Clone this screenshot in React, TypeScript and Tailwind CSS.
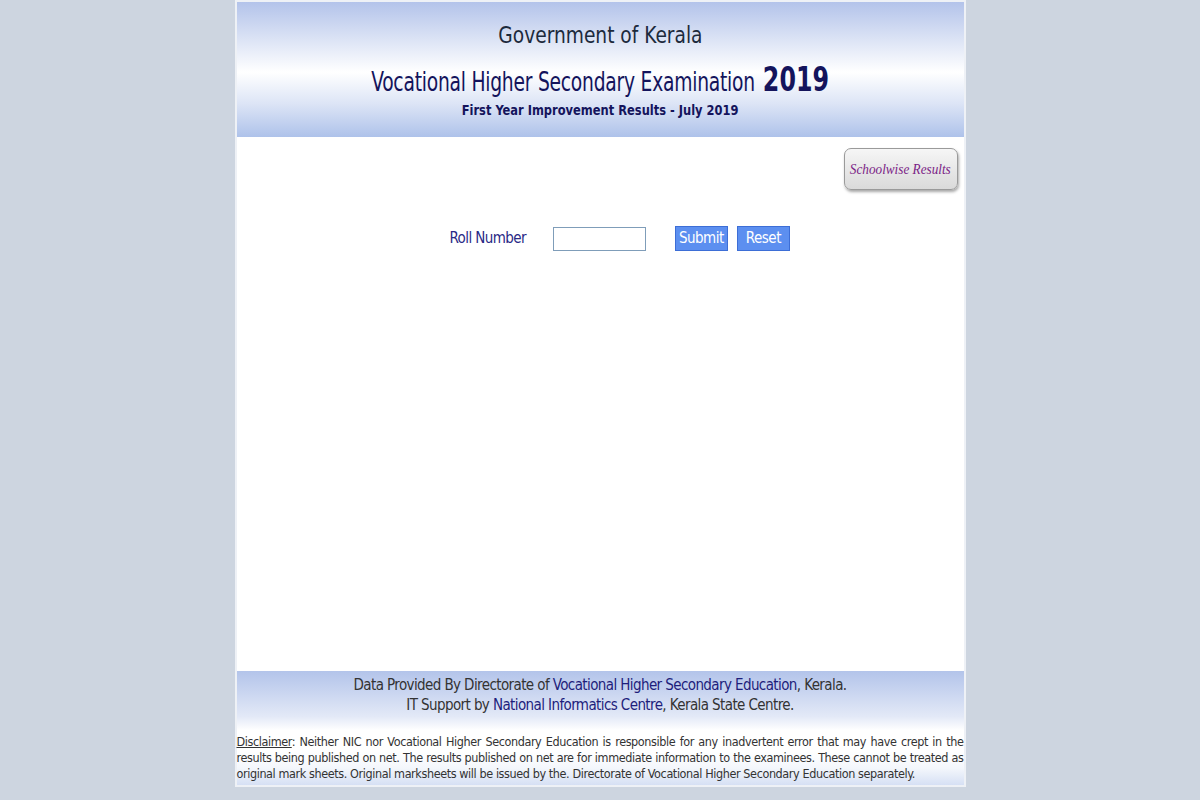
import React from "react";

const F = { fontFamily: '"DejaVu Sans Condensed", "DejaVu Sans", Verdana, sans-serif' };

export default function App() {
  return (
    <div className="w-[1200px] h-[800px] bg-[#cdd5e0] flex justify-center" style={F}>
      <div className="w-[731px] h-[787px] bg-white border-2 border-[#eef1f6] flex flex-col">
        <div className="h-[135px] bg-[linear-gradient(to_bottom,#b3c3ea_0%,#dfe6f6_30%,#ffffff_52%,#dde5f6_75%,#aec2ea_100%)] flex flex-col items-center">
          <div className="mt-[18px] text-[23px] leading-[30px] text-[#1c2a3c] scale-x-[0.9] whitespace-nowrap">Government of Kerala</div>
          <div className="mt-[13px] flex items-baseline text-[#14145c] scale-x-[0.8] whitespace-nowrap">
            <span className="text-[26px] leading-[34px] tracking-[-0.3px]">Vocational Higher Secondary Examination</span>
            <span className="ml-[10px] text-[33px] leading-[34px] font-bold">2019</span>
          </div>
          <div className="mt-[2px] text-[14px] leading-[18px] font-bold text-[#14145c] scale-x-[0.91] whitespace-nowrap">First Year Improvement Results - July 2019</div>
        </div>
        <div className="flex-1 flex flex-col">
          <div className="flex justify-end pr-[6px] pt-[11px]">
            <div className="w-[114px] h-[42px] rounded-[7px] border border-[#9a9a9a] bg-[linear-gradient(to_bottom,#f6f6f6,#dadada)] shadow-[1px_2px_3px_rgba(0,0,0,0.35)] flex items-center justify-center">
              <span className="text-[15px] italic text-[#7b1d86] whitespace-nowrap scale-x-[0.88]" style={{ fontFamily: '"Liberation Serif", "Times New Roman", serif' }}>Schoolwise Results</span>
            </div>
          </div>
          <div className="mt-[36px] flex items-center pl-[213px]">
            <span className="text-[15px] text-[#2a2a86] tracking-[-0.6px]">Roll Number</span>
            <div className="ml-[27px] w-[93px] h-[24px] border border-[#7f9db9] bg-white" />
            <div className="ml-[29px] w-[53px] h-[25px] bg-[#5c8ff0] border border-[#3d6ed6] text-white text-[15px] flex items-center justify-center tracking-[-0.5px]">Submit</div>
            <div className="ml-[9px] w-[53px] h-[25px] bg-[#5c8ff0] border border-[#3d6ed6] text-white text-[15px] flex items-center justify-center tracking-[-0.5px]">Reset</div>
          </div>
        </div>
        <div className="h-[114px] bg-[linear-gradient(to_bottom,#b3c4ea_0%,#e3e9f7_40%,#ffffff_52%,#ffffff_70%,#f4f7fc_85%,#d6e0f4_100%)] flex flex-col">
          <div className="pt-[4px] text-center text-[15px] leading-[20px] text-[#333333] tracking-[-0.6px]">
            <div>Data Provided By Directorate of <span className="text-[#1e1e7c]">Vocational Higher Secondary Education</span>, Kerala.</div>
            <div>IT Support by <span className="text-[#1e1e7c]">National Informatics Centre</span>, Kerala State Centre.</div>
          </div>
          <div className="mt-[19px] text-[12.5px] leading-[16px] text-[#333333] text-justify tracking-[-0.4px]">
            <span className="underline">Disclaimer</span>: Neither NIC nor Vocational Higher Secondary Education is responsible for any inadvertent error that may have crept in the results being published on net. The results published on net are for immediate information to the examinees. These cannot be treated as original mark sheets. Original marksheets will be issued by the. Directorate of Vocational Higher Secondary Education separately.
          </div>
        </div>
      </div>
    </div>
  );
}
